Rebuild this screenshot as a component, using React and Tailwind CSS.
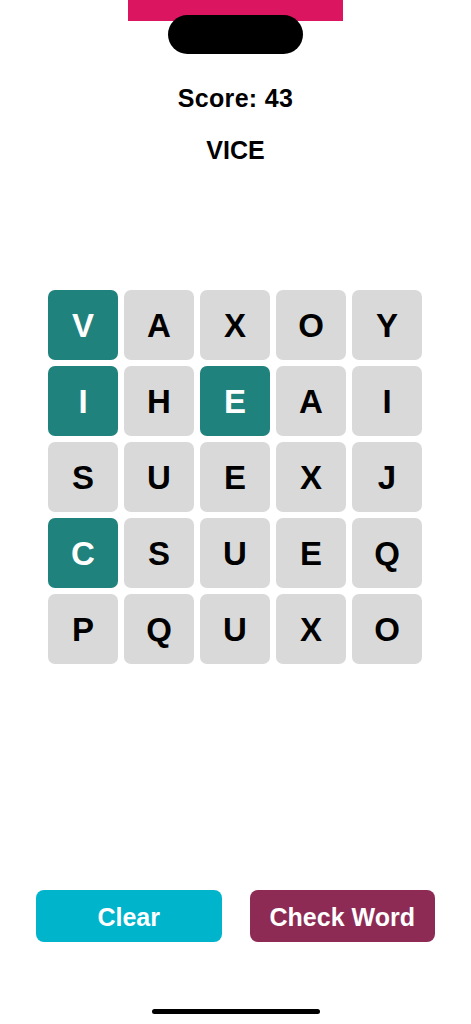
import { useState } from 'react';

const BOARD = [
  ['V', 'A', 'X', 'O', 'Y'],
  ['I', 'H', 'E', 'A', 'I'],
  ['S', 'U', 'E', 'X', 'J'],
  ['C', 'S', 'U', 'E', 'Q'],
  ['P', 'Q', 'U', 'X', 'O'],
];

// cells that make up the current word
const START = ['0-0', '1-0', '3-0', '1-2'];

export default function App() {
  const [picked, setPicked] = useState(START);
  const [score] = useState(43);

  const word = picked.map((k) => {
    const [r, c] = k.split('-').map(Number);
    return BOARD[r][c];
  }).join('');

  const toggle = (key) => {
    setPicked((prev) => (prev.includes(key) ? prev.filter((k) => k !== key) : [...prev, key]));
  };

  return (
    <div className="relative flex h-[1024px] flex-col overflow-hidden bg-white font-['Liberation_Sans',Arial,sans-serif] text-black">
      {/* status bar / island */}
      <div className="mx-auto h-[21px] w-[215px] bg-[#dc1560]" />
      <div className="absolute left-[168px] top-[15px] h-[39px] w-[135px] rounded-full bg-black" />

      <p className="mt-[63px] text-center text-[25px] font-bold leading-[28px] tracking-[0.3px]">Score: {score}</p>
      <p className="mt-[24px] h-[28px] text-center text-[25px] font-bold leading-[28px]">{word}</p>

      {/* board */}
      <div className="ml-[48px] mt-[126px] grid w-[374px] grid-cols-5 gap-[6px]">
        {BOARD.map((row, r) =>
          row.map((ch, c) => {
            const key = `${r}-${c}`;
            const on = picked.includes(key);
            return (
              <button
                key={key}
                onClick={() => toggle(key)}
                className={`flex h-[70px] w-[70px] items-center justify-center rounded-[7px] pt-[1px] text-[33px] font-bold ${on ? 'bg-[#20827c] text-white' : 'bg-[#d9d9d9] text-black'}`}
              >
                {ch}
              </button>
            );
          })
        )}
      </div>

      {/* actions */}
      <div className="mt-[226px] flex gap-[28px] px-[36px]">
        <button
          onClick={() => setPicked([])}
          className="h-[52px] flex-1 rounded-[8px] bg-[#00b4cc] pt-[3px] text-[25px] font-bold text-white"
        >
          Clear
        </button>
        <button className="h-[52px] flex-1 rounded-[8px] bg-[#8e2b54] pt-[3px] text-[25px] font-bold text-white">
          Check Word
        </button>
      </div>

      <div className="mx-auto mt-[67px] h-[5px] w-[168px] rounded-full bg-black" />
    </div>
  );
}
